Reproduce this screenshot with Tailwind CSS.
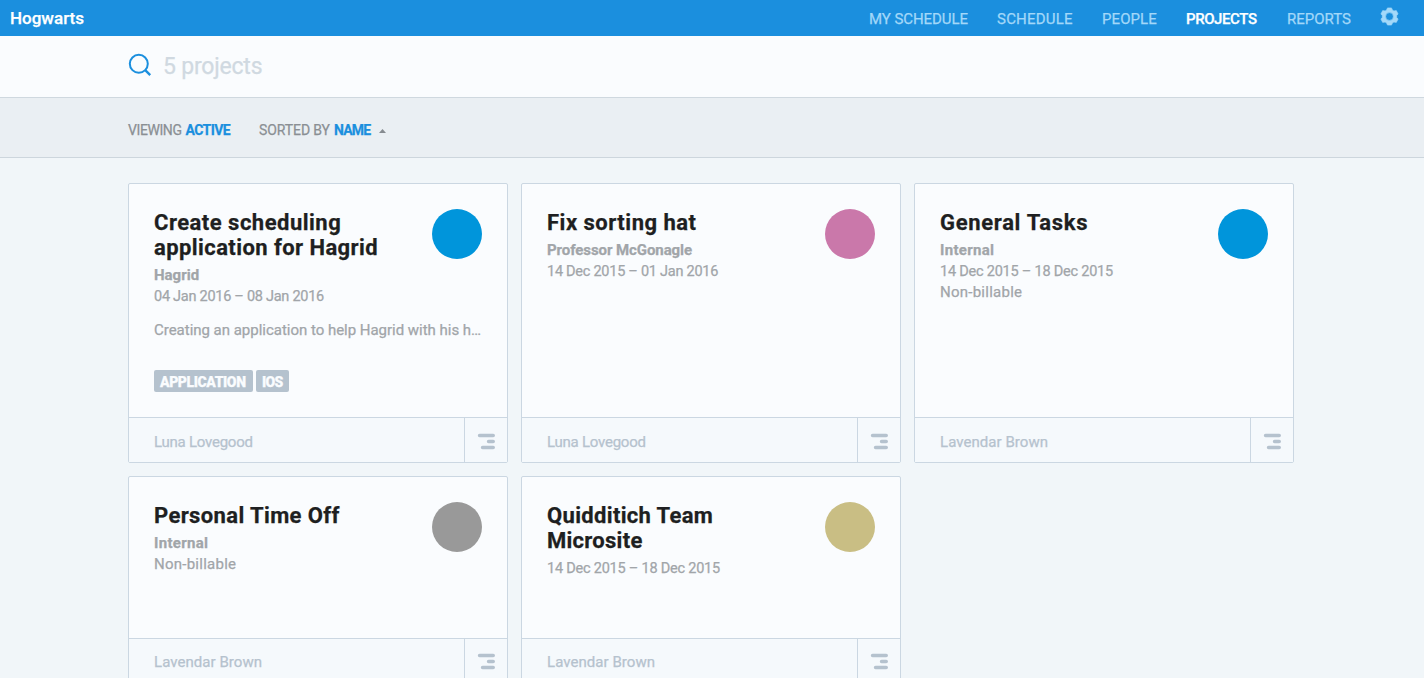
<!DOCTYPE html>
<html lang="en">
<head>
<meta charset="utf-8">
<title>Projects</title>
<script src="https://cdn.jsdelivr.net/npm/@tailwindcss/browser@4"></script>
</head>
<body class="h-[678px] overflow-hidden bg-[#f1f6f9] font-['Roboto',sans-serif] text-[15px] leading-[21px] text-[#a1a5a9] [-webkit-text-stroke:0.25px]">
<svg class="hidden">
  <symbol id="bars" viewBox="0 0 18 17">
    <g fill="none" stroke="#b5c2ce" stroke-width="3.6" stroke-linecap="round"><path d="M2.6 2.5H16.2M11.6 8.5H16.2M5.6 14.5H16.2"/></g>
  </symbol>
</svg>

<header class="flex h-9 items-center justify-between bg-[#1b8fde] pr-[25px] pl-2.5">
  <div class="text-[17px] font-medium tracking-[0.01px] text-white">Hogwarts</div>
  <nav class="flex items-center text-[#a3d8f9]">
    <a class="mt-[3px] w-32 tracking-[-0.07px]">MY SCHEDULE</a>
    <a class="mt-[3px] w-[105px] tracking-[0.22px]">SCHEDULE</a>
    <a class="mt-[3px] w-[84px] tracking-[0.08px]">PEOPLE</a>
    <a class="mt-[3px] w-[101px] font-medium tracking-[-0.41px] text-white">PROJECTS</a>
    <a class="mt-[3px] w-[93px]">REPORTS</a>
    <svg class="-mt-1 h-[19px] w-[19px]" viewBox="-9.5 -9.5 19 19">
      <path fill="#a3d8f9" fill-rule="evenodd" d="M-2-8.6H2L2.9-6.5L4.4-5.6L6.8-5.9L8.6-2.6L7.2-.9V.9L8.6 2.6L6.8 5.9L4.4 5.6L2.9 6.5L2 8.6H-2L-2.9 6.5L-4.4 5.6L-6.8 5.9L-8.6 2.6L-7.2 .9V-.9L-8.6-2.6L-6.8-5.9L-4.4-5.6L-2.9-6.5ZM0-3.9A3.9 3.9 0 1 0 0 3.9A3.9 3.9 0 1 0 0-3.9Z" stroke="#a3d8f9" stroke-width=".6" stroke-linejoin="round"/>
    </svg>
  </nav>
</header>

<section class="flex h-[62px] items-center border-b border-[#cfd8df] bg-[#fafcfe] pl-32">
  <svg class="-mt-1 h-6 w-6" viewBox="0 0 24 24" fill="none" stroke="#1b8fde" stroke-width="2"><circle cx="10.8" cy="10.8" r="9"/><path d="M17.2 17.2L22.2 22.2" stroke-width="2.4"/></svg>
  <div class="ml-[11px] text-[23px] leading-[30px] tracking-[-0.2px] text-[#d0d9e1]">5 projects</div>
</section>

<section class="flex h-[60px] items-center border-b border-[#cdd6dd] bg-[#eaeff3] pt-[5px] pl-32 text-[14px] text-[#8a8f94]">
  <div class="w-[131px] whitespace-nowrap"><span class="tracking-[-0.41px]">VIEWING</span><b class="ml-1 tracking-[-0.61px] text-[#1b8fde]">ACTIVE</b></div>
  <div class="flex items-center whitespace-nowrap"><span class="tracking-[-0.09px]">SORTED BY</span><b class="ml-1 tracking-[-0.8px] text-[#1b8fde]">NAME</b>
    <svg class="mt-0.5 ml-[9px] h-1 w-[7px]" viewBox="0 0 7 4"><path d="M0 4L3.5 0L7 4Z" fill="#868b90"/></svg></div>
</section>

<main class="grid grid-cols-[380px_380px_380px] gap-[13px] pt-[25px] pl-32">
  <article class="rounded-xs border border-[#cbd7e2] bg-[#fafcfe]">
    <div class="flex h-[233px] flex-col px-[25px] pt-[26px]">
      <div class="flex justify-between">
        <h2 class="text-[22px] leading-[25px] font-bold tracking-[0.49px] text-[#1e1f21]">Create scheduling<br><span class="tracking-[0.42px]">application for Hagrid</span></h2>
        <i class="-mt-px h-[50px] w-[50px] rounded-full bg-[#0095db]"></i>
      </div>
      <div class="mt-[5px] font-bold">Hagrid</div>
      <div class="text-[14.5px] tracking-[-0.27px]">04 Jan 2016 – 08 Jan 2016</div>
      <div class="mt-[13px] whitespace-nowrap tracking-[-0.02px]">Creating an application to help Hagrid with his h…</div>
      <div class="mt-[29px] flex gap-[3px] text-[14px] leading-[25px] font-black text-[#fafcfe]">
        <span class="h-[22px] w-[99px] rounded-xs bg-[#b5c2ce] pl-1.5 tracking-[-0.41px]">APPLICATION</span>
        <span class="h-[22px] w-[33px] rounded-xs bg-[#b5c2ce] pl-1.5 tracking-[-0.7px]">IOS</span>
      </div>
    </div>
    <footer class="flex h-[45px] border-t border-[#cbd7e2] bg-[#f5f9fc] pl-[25px] text-[#b5c2ce]">
      <div class="flex-1 pt-3.5 tracking-[-0.24px]">Luna Lovegood</div>
      <div class="w-[43px] border-l border-[#cbd7e2] pt-[15px] pl-3"><svg class="h-[17px] w-[18px]"><use href="#bars"/></svg></div>
    </footer>
  </article>

  <article class="rounded-xs border border-[#cbd7e2] bg-[#fafcfe]">
    <div class="h-[233px] px-[25px] pt-[26px]">
      <div class="flex h-[30px] justify-between">
        <h2 class="text-[22px] leading-[25px] font-bold tracking-[0.5px] text-[#1e1f21]">Fix sorting hat</h2>
        <i class="-mt-px h-[50px] w-[50px] rounded-full bg-[#ca78aa]"></i>
      </div>
      <div class="font-bold tracking-[-0.08px]">Professor McGonagle</div>
      <div class="text-[14.5px] tracking-[-0.26px]">14 Dec 2015 – 01 Jan 2016</div>
    </div>
    <footer class="flex h-[45px] border-t border-[#cbd7e2] bg-[#f5f9fc] pl-[25px] text-[#b5c2ce]">
      <div class="flex-1 pt-3.5 tracking-[-0.24px]">Luna Lovegood</div>
      <div class="w-[43px] border-l border-[#cbd7e2] pt-[15px] pl-3"><svg class="h-[17px] w-[18px]"><use href="#bars"/></svg></div>
    </footer>
  </article>

  <article class="rounded-xs border border-[#cbd7e2] bg-[#fafcfe]">
    <div class="h-[233px] px-[25px] pt-[26px]">
      <div class="flex h-[30px] justify-between">
        <h2 class="text-[22px] leading-[25px] font-bold tracking-[0.67px] text-[#1e1f21]">General Tasks</h2>
        <i class="-mt-px h-[50px] w-[50px] rounded-full bg-[#0095db]"></i>
      </div>
      <div class="font-bold tracking-[0.3px]">Internal</div>
      <div class="text-[14.5px] tracking-[-0.22px]">14 Dec 2015 – 18 Dec 2015</div>
      <div class="tracking-[0.25px]">Non-billable</div>
    </div>
    <footer class="flex h-[45px] border-t border-[#cbd7e2] bg-[#f5f9fc] pl-[25px] text-[#b5c2ce]">
      <div class="flex-1 pt-3.5 tracking-[0.05px]">Lavendar Brown</div>
      <div class="w-[43px] border-l border-[#cbd7e2] pt-[15px] pl-3"><svg class="h-[17px] w-[18px]"><use href="#bars"/></svg></div>
    </footer>
  </article>

  <article class="rounded-xs border border-[#cbd7e2] bg-[#fafcfe]">
    <div class="h-[161px] px-[25px] pt-[26px]">
      <div class="flex h-[30px] justify-between">
        <h2 class="text-[22px] leading-[25px] font-bold tracking-[0.38px] text-[#1e1f21]">Personal Time Off</h2>
        <i class="-mt-px h-[50px] w-[50px] rounded-full bg-[#999999]"></i>
      </div>
      <div class="font-bold tracking-[0.3px]">Internal</div>
      <div class="tracking-[0.25px]">Non-billable</div>
    </div>
    <footer class="flex h-[45px] border-t border-[#cbd7e2] bg-[#f5f9fc] pl-[25px] text-[#b5c2ce]">
      <div class="flex-1 pt-[13px] tracking-[0.05px]">Lavendar Brown</div>
      <div class="w-[43px] border-l border-[#cbd7e2] pt-3.5 pl-3"><svg class="h-[17px] w-[18px]"><use href="#bars"/></svg></div>
    </footer>
  </article>

  <article class="rounded-xs border border-[#cbd7e2] bg-[#fafcfe]">
    <div class="h-[161px] px-[25px] pt-[26px]">
      <div class="flex justify-between">
        <h2 class="text-[22px] leading-[25px] font-bold text-[#1e1f21]"><span class="tracking-[0.33px]">Quidditich Team</span><br><span class="tracking-[0.27px]">Microsite</span></h2>
        <i class="-mt-px h-[50px] w-[50px] rounded-full bg-[#c9be84]"></i>
      </div>
      <div class="mt-[5px] text-[14.5px] tracking-[-0.22px]">14 Dec 2015 – 18 Dec 2015</div>
    </div>
    <footer class="flex h-[45px] border-t border-[#cbd7e2] bg-[#f5f9fc] pl-[25px] text-[#b5c2ce]">
      <div class="flex-1 pt-[13px] tracking-[0.05px]">Lavendar Brown</div>
      <div class="w-[43px] border-l border-[#cbd7e2] pt-3.5 pl-3"><svg class="h-[17px] w-[18px]"><use href="#bars"/></svg></div>
    </footer>
  </article>
</main>
</body>
</html>
